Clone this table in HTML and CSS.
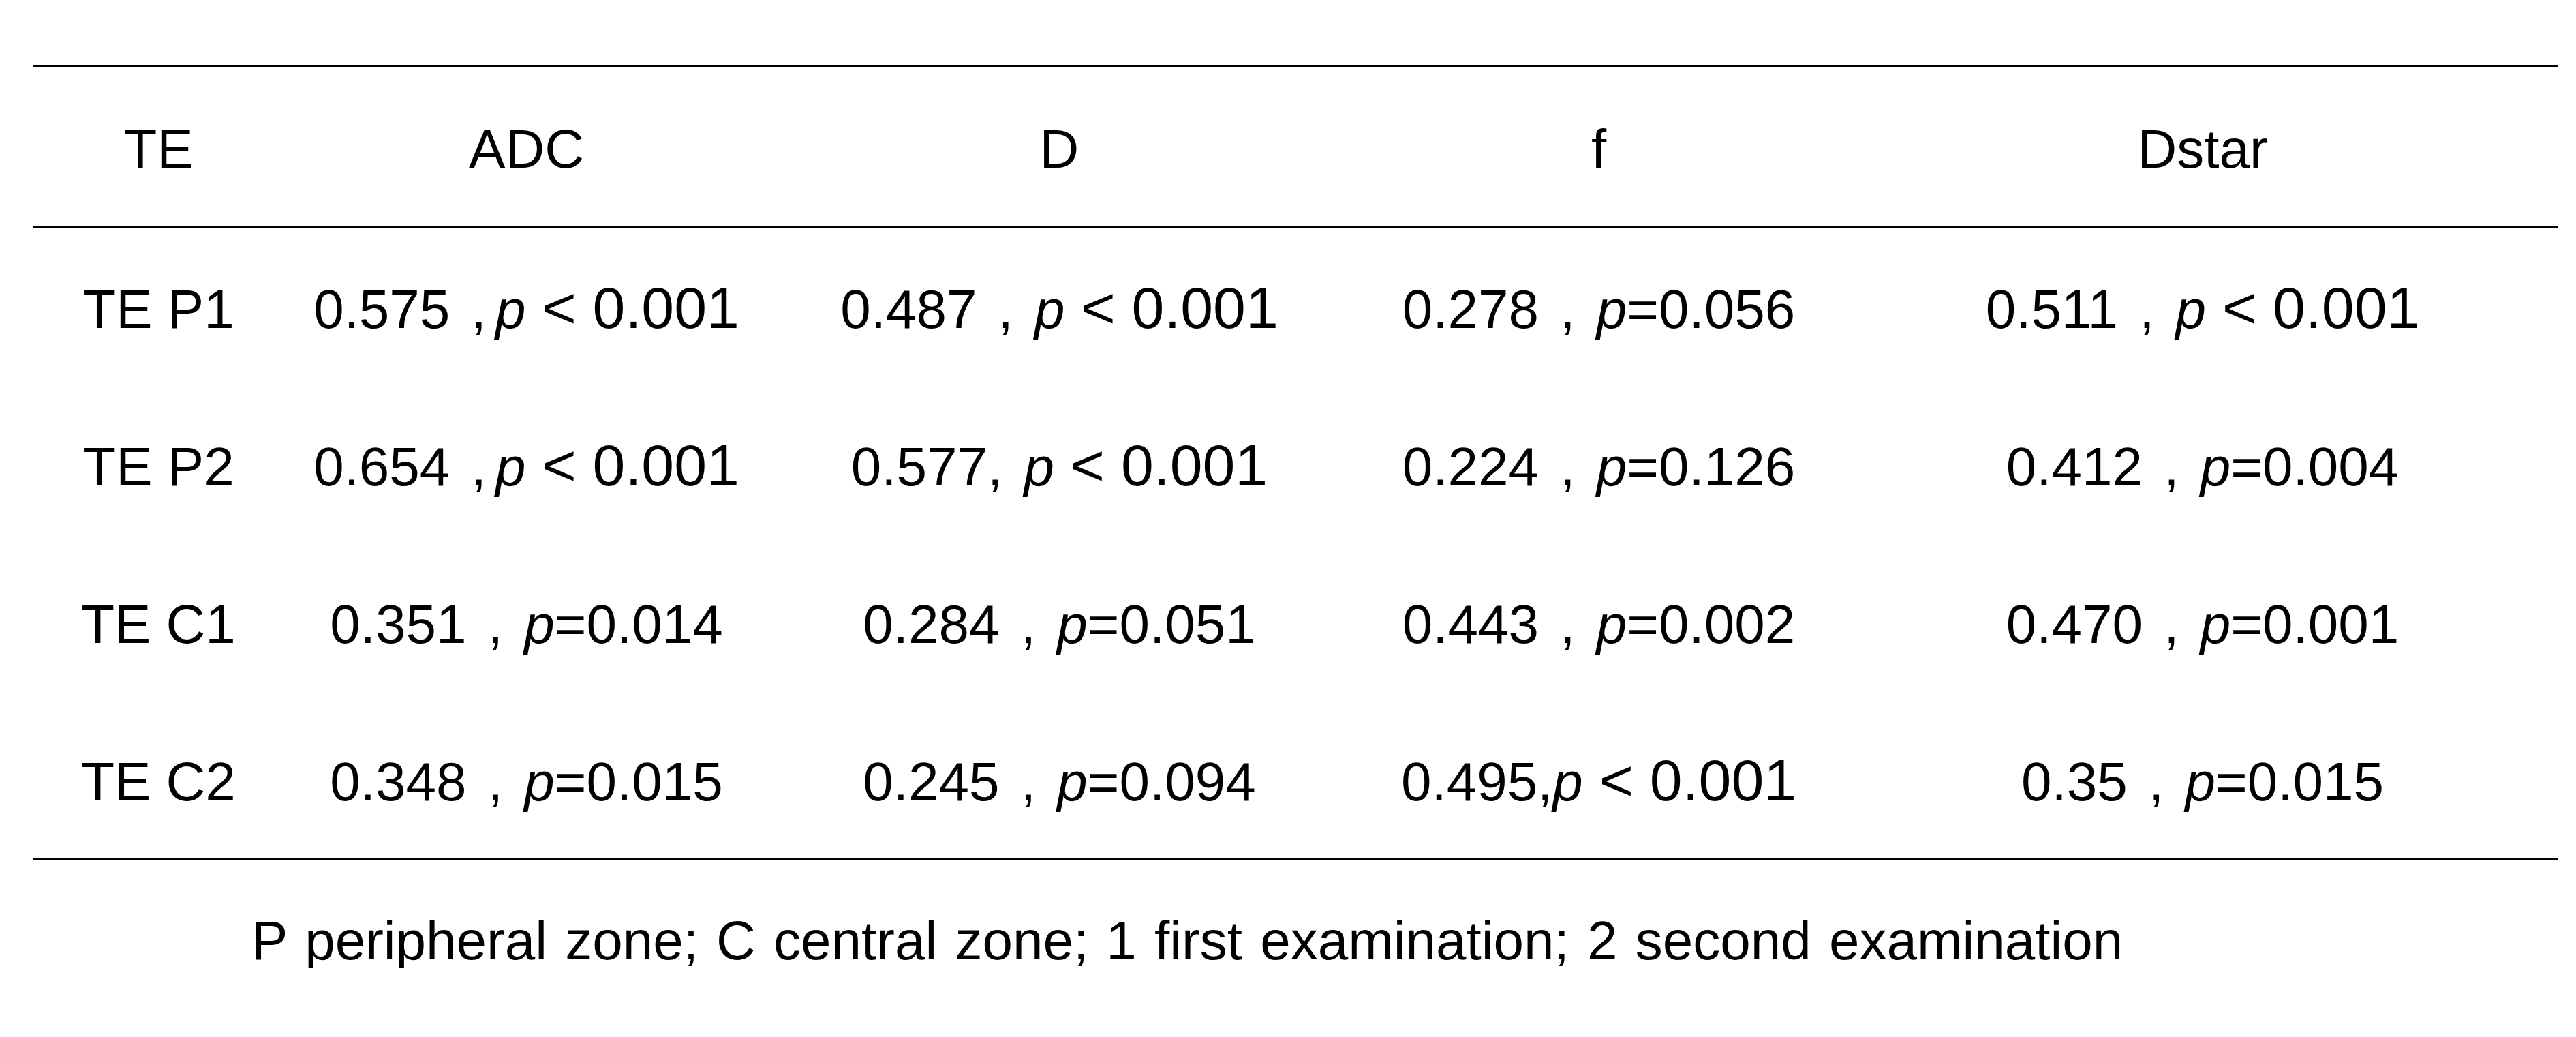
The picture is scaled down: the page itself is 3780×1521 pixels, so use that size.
FILE: index.html
```html
<!DOCTYPE html>
<html lang="en">
<head>
<meta charset="utf-8">
<title>Table</title>
<link rel="stylesheet" href="styles.css">
</head>
<body>
<div class="page">
  <div class="table">
    <div class="cell head">TE</div>
    <div class="cell head">ADC</div>
    <div class="cell head">D</div>
    <div class="cell head">f</div>
    <div class="cell head">Dstar</div>

    <div class="cell label">TE P1</div>
    <div class="cell val">0.575 ,&#8198;<i>p</i><span class="lt"> &lt; 0.001</span></div>
    <div class="cell val">0.487 , <i>p</i><span class="lt"> &lt; 0.001</span></div>
    <div class="cell val">0.278 , <i>p</i>=0.056</div>
    <div class="cell val">0.511 , <i>p</i><span class="lt"> &lt; 0.001</span></div>

    <div class="cell label">TE P2</div>
    <div class="cell val">0.654 ,&#8198;<i>p</i><span class="lt"> &lt; 0.001</span></div>
    <div class="cell val">0.577, <i>p</i><span class="lt"> &lt; 0.001</span></div>
    <div class="cell val">0.224 , <i>p</i>=0.126</div>
    <div class="cell val">0.412 , <i>p</i>=0.004</div>

    <div class="cell label">TE C1</div>
    <div class="cell val">0.351 , <i>p</i>=0.014</div>
    <div class="cell val">0.284 , <i>p</i>=0.051</div>
    <div class="cell val">0.443 , <i>p</i>=0.002</div>
    <div class="cell val">0.470 , <i>p</i>=0.001</div>

    <div class="cell label">TE C2</div>
    <div class="cell val">0.348 , <i>p</i>=0.015</div>
    <div class="cell val">0.245 , <i>p</i>=0.094</div>
    <div class="cell val">0.495,<i>p</i><span class="lt"> &lt; 0.001</span></div>
    <div class="cell val">0.35 , <i>p</i>=0.015</div>
  </div>
  <p class="note">P peripheral zone; C central zone; 1 first examination; 2 second examination</p>
</div>
</body>
</html>
```

FILE: styles.css
```css
html, body {
  margin: 0;
  padding: 0;
  background: #ffffff;
}

body {
  font-family: "Liberation Sans", Arial, sans-serif;
  color: #000000;
  font-size: 80px;
}

.page {
  padding: 96px 0 0 48px;
}

.table {
  display: grid;
  grid-template-columns: 369px 711px 853px 730px 1042px;
  width: 3705px;
  border-top: 3px solid #000;
  border-bottom: 3px solid #000;
}

.cell {
  text-align: center;
  line-height: 80px;
  height: 80px;
  padding: 80px 0 71px;
  white-space: nowrap;
}

.cell.head {
  padding-bottom: 72px;
  border-bottom: 3px solid #000;
}

.cell.val {
  word-spacing: 9px;
}

.cell i {
  font-style: italic;
}

.lt {
  font-size: 86px;
  line-height: 0;
  word-spacing: 0;
}

.note {
  margin: 79px 0 0 321px;
  line-height: 80px;
  word-spacing: 4px;
}
```
